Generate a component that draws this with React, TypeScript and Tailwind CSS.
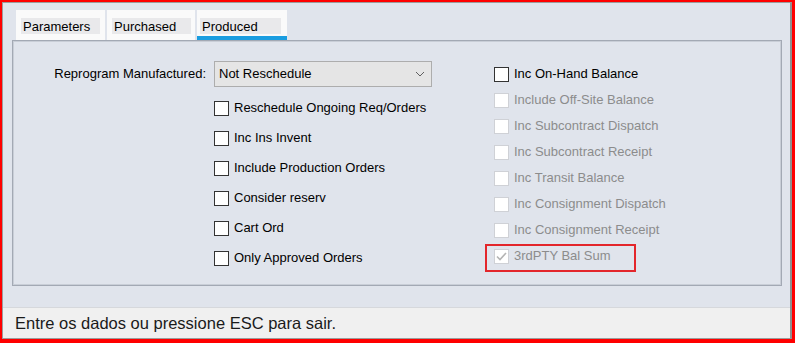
import React from "react";

const font = { fontFamily: '"Liberation Sans", Arial, sans-serif' };

function Check({ label, disabled, checked }: { label: string; disabled?: boolean; checked?: boolean }) {
  return (
    <div className="flex items-center gap-[5px]">
      <span
        className={
          "flex h-[15px] w-[15px] shrink-0 items-center justify-center border bg-white " +
          (disabled ? "border-[#cfd1d6] bg-[#f7f7f8]" : "border-[#333333]")
        }
      >
        {checked && (
          <svg width="13" height="13" viewBox="0 0 13 13" fill="none">
            <path d="M2 6.5 L5 9.5 L11 3" stroke="#b4b4b4" strokeWidth="1.6" />
          </svg>
        )}
      </span>
      <span className={"whitespace-nowrap text-[13px] " + (disabled ? "text-[#8c8c8c]" : "text-black")}>{label}</span>
    </div>
  );
}

function Tab({ label, width, labelWidth, active }: { label: string; width: number; labelWidth: number; active?: boolean }) {
  return (
    <div
      className={"relative flex h-[30px] flex-col bg-[#fafafa] pt-[8px] " + (active ? "pl-[3px]" : "pl-[5px]")}
      style={{ width }}
    >
      <span className="flex h-[16px] items-center bg-[#e9e9eb] pl-[2px] text-[13px] leading-none text-black" style={{ width: labelWidth }}>
        {label}
      </span>
      {active && <span className="absolute bottom-0 left-0 h-[4px] w-full bg-[#1a9de0]" />}
    </div>
  );
}

export default function App() {
  const left = [
    "Reschedule Ongoing Req/Orders",
    "Inc Ins Invent",
    "Include Production Orders",
    "Consider reserv",
    "Cart Ord",
    "Only Approved Orders",
  ];
  const right = [
    "Include Off-Site Balance",
    "Inc Subcontract Dispatch",
    "Inc Subcontract Receipt",
    "Inc Transit Balance",
    "Inc Consignment Dispatch",
    "Inc Consignment Receipt",
  ];

  return (
    <div className="h-[343px] w-[795px] border-b-4 border-l-2 border-r-[3px] border-t-2 border-[#ff0000]" style={font}>
      <div className="flex h-full flex-col border-b border-l border-r-2 border-t border-[#9c9c9c] border-r-[#8f8f8f] bg-[#e0e4ec]">
        {/* tabs */}
        <div className="flex gap-[2px] pl-[13px] pt-[7px]">
          <Tab label="Parameters" width={89} labelWidth={79} />
          <Tab label="Purchased" width={88} labelWidth={79} />
          <Tab label="Produced" width={90} labelWidth={81} active />
        </div>

        {/* panel */}
        <div className="ml-[9px] mr-[8px] flex h-[246px] items-start border border-[#a3a9b4] pt-[20px] shadow-[inset_0_0_0_1px_#c9ced7]">
          <div className="grid w-[420px] grid-cols-[193px_218px] content-start gap-x-[8px]">
            <div className="flex h-[26px] items-center justify-end text-[13px] text-black">Reprogram Manufactured:</div>
            <div className="flex h-[26px] items-center justify-between border border-[#adadad] bg-[#e5e5e5] pl-[4px] pr-[6px] text-[13px] text-black">
              <span>Not Reschedule</span>
              <svg width="10" height="6" viewBox="0 0 10 6" fill="none">
                <path d="M1 1 L5 5 L9 1" stroke="#606060" strokeWidth="1" />
              </svg>
            </div>
            <div />
            <div className="flex flex-col pt-[6px]">
              {left.map((l) => (
                <div key={l} className="flex h-[30px] items-center">
                  <Check label={l} />
                </div>
              ))}
            </div>
          </div>

          <div className="ml-[61px] flex flex-col">
            <div className="flex h-[26px] items-center">
              <Check label="Inc On-Hand Balance" />
            </div>
            {right.map((l) => (
              <div key={l} className="flex h-[26px] items-center">
                <Check label={l} disabled />
              </div>
            ))}
            <div className="relative flex h-[26px] items-center">
              <Check label="3rdPTY Bal Sum" disabled checked />
              <span className="absolute left-[-9px] top-[1px] h-[28px] w-[151px] border-2 border-[#e3262b]" />
            </div>
          </div>
        </div>

        {/* status bar */}
        <div className="mt-[21px] flex flex-1 items-center border-t border-[#d6d8dc] bg-[#f0f0f0] pl-[12px] text-[16.5px] text-[#1a1a1a]">
          Entre os dados ou pressione ESC para sair.
        </div>
      </div>
    </div>
  );
}
